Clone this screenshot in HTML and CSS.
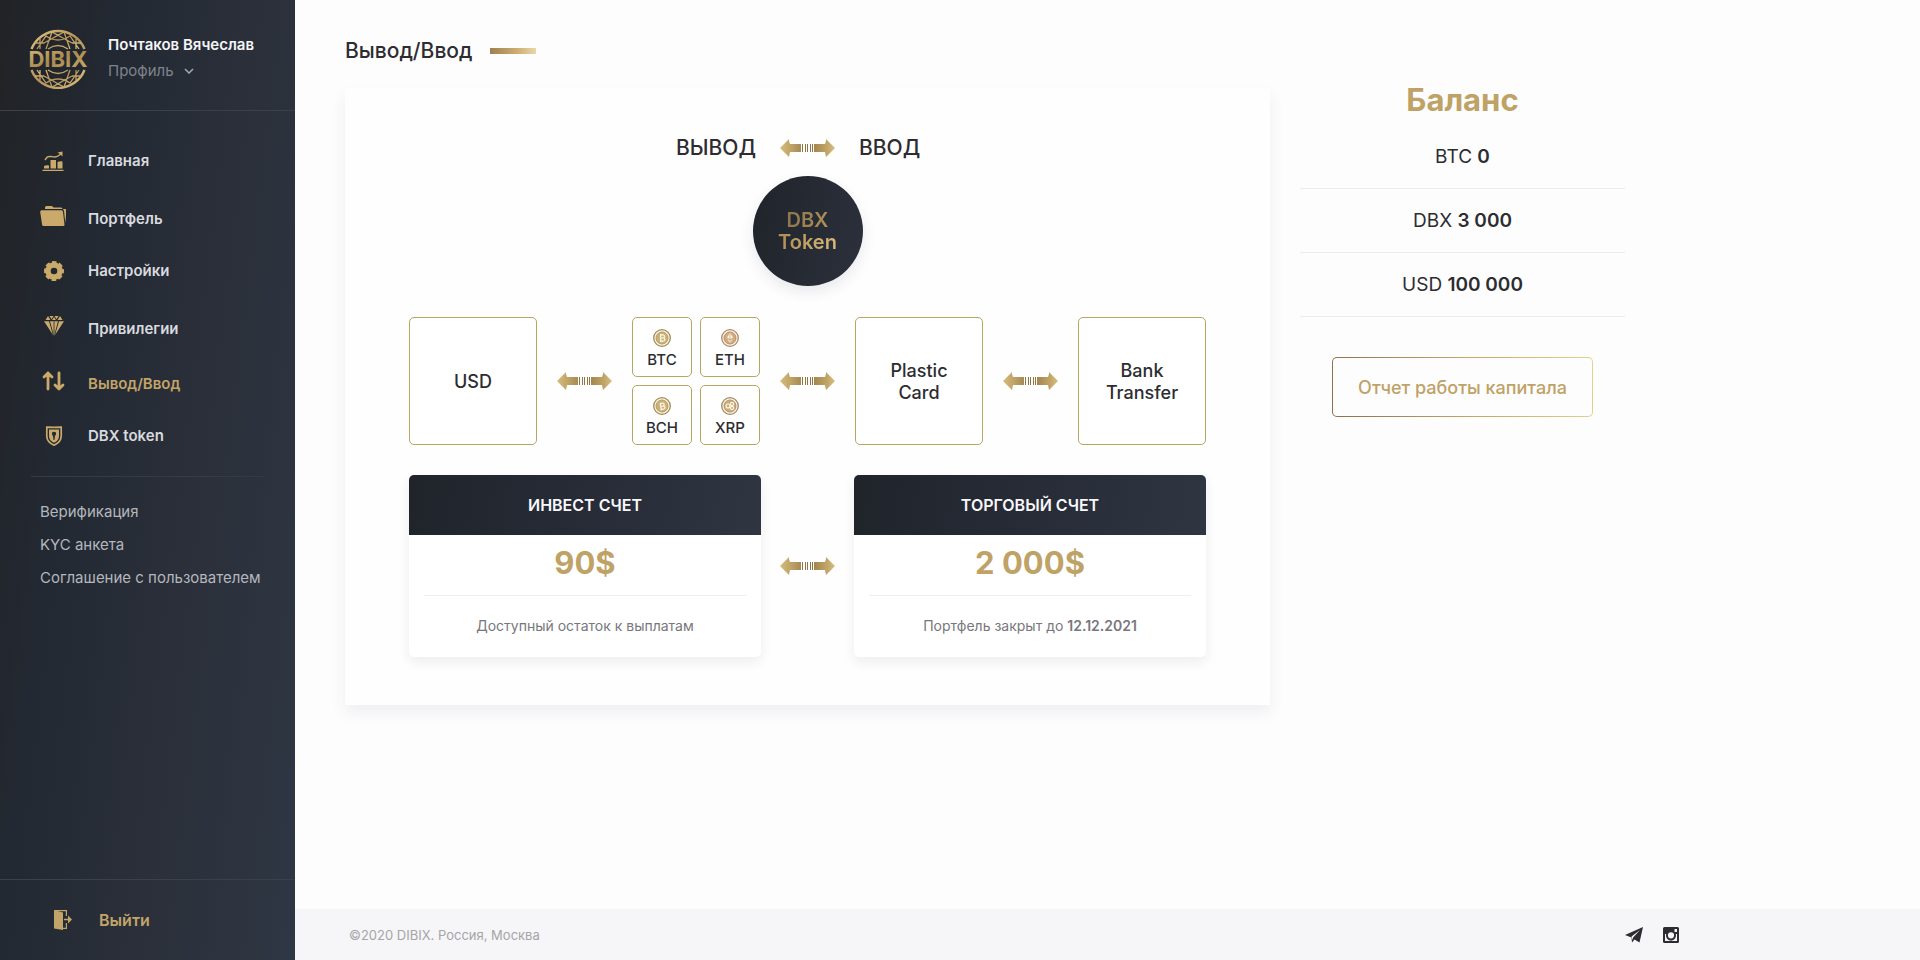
FILE: index.html
```html
<!DOCTYPE html>
<html lang="ru">
<head>
<meta charset="utf-8">
<meta name="viewport" content="width=device-width, initial-scale=1">
<title>DIBIX — Вывод/Ввод</title>
<link rel="stylesheet" href="styles.css">
</head>
<body>
<svg class="sprite" aria-hidden="true">
  <defs>
    <linearGradient id="gold" x1="0" y1="0" x2="1" y2="1">
      <stop offset="0" stop-color="#dcbf7c"/><stop offset="0.5" stop-color="#b3925a"/><stop offset="1" stop-color="#dcc07c"/>
    </linearGradient>
    <linearGradient id="gold-text" x1="0" y1="0" x2="1" y2="1">
      <stop offset="0" stop-color="#d9bb77"/><stop offset="0.5" stop-color="#a98a50"/><stop offset="1" stop-color="#cfae69"/>
    </linearGradient>
    <linearGradient id="head" x1="0" y1="0" x2="1" y2="0">
      <stop offset="0" stop-color="#d6bc7b"/><stop offset="0.5" stop-color="#c0a468"/><stop offset="1" stop-color="#a88a55"/>
    </linearGradient>
    <linearGradient id="tail" x1="0" y1="0" x2="1" y2="0">
      <stop offset="0" stop-color="#a3854f"/><stop offset="0.6" stop-color="#c0a467"/><stop offset="1" stop-color="#d8be7c"/>
    </linearGradient>
  </defs>
  <symbol id="swap" viewBox="0 0 55 20">
    <path fill="url(#head)" d="M0 10 9 1v2l1 3h11v8H10l-1 5Z"/>
    <path fill="url(#tail)" d="M55 10 46 1v2l-1 3H34v8h11l1 5Z"/>
    <path fill="#8f7444" d="M22 6h1v8h-1zM25 6h1v8h-1zM27 6h1v8h-1zM30 6h1v8h-1zM32 6h1v8h-1z"/>
  </symbol>
</svg>

<div class="page">
  <aside class="sidebar">
    <div class="profile">
      <svg class="logo" viewBox="0 0 60 60" role="img" aria-label="DIBIX">
        <g fill="none" stroke="url(#gold)" stroke-width="1.300">
          <path stroke-width="2.400" d="M3.500 20A28.500 28.500 0 0 1 56.500 20M3.500 41A28.500 28.500 0 0 0 56.500 41"/>
          <path d="M7 14h9M53 14h-9M12 10v10M48 10v10M9 20l9-13q12 8 24 0l9 13M18 20 24 3l20 11M42 20 36 3 16 14M20 20q10-7 20 0"/>
          <path d="M7 47h9M53 47h-9M12 51V41M48 51V41M9 41l9 13q12-8 24 0l9-13M18 41l6 17 20-11M42 41l-6 17-20-11M20 41q10 7 20 0"/>
        </g>
        <text class="logo-text" x="30" y="38" text-anchor="middle" fill="url(#gold-text)">DIBIX</text>
      </svg>
      <div class="profile-info">
        <div class="profile-name">Почтаков Вячеслав</div>
        <button class="profile-toggle" type="button">Профиль
          <svg class="chevron" viewBox="0 0 10 6"><path d="m1 1 4 4 4-4" fill="none" stroke="currentColor" stroke-width="1.500"/></svg>
        </button>
      </div>
    </div>

    <nav class="menu">
      <a class="menu-item" href="#">
        <svg class="menu-icon" viewBox="0 0 26 20"><path fill="currentColor" d="M4 17.500V15q2-1 5-.500v3zM10.500 17.500V9h5.500v8.500zM17.500 17.500V11q2.500-1 5-.500v7zM2.500 18.800h21V20h-21z"/><path fill="none" stroke="currentColor" stroke-width="1.500" d="M5 9c2-3 3-4 6-3.500s5 1 7-.500l3-2"/><path fill="currentColor" d="m17.500 1.500 5-1v5l-2-2z"/></svg>
        <span>Главная</span></a>
      <a class="menu-item menu-item--low" href="#">
        <svg class="menu-icon" viewBox="0 0 26 20"><path fill="currentColor" d="M5 3V1.500Q5 0 6.500 0H12l1.500 1.500H21q1.500 0 1.500 1.500z"/><path fill="currentColor" d="M1.500 4.200h20q1.300 0 1.500 1.500l1.500 13q0 1.300-1.300 1.300H3.500q-1.200 0-1.400-1.200L.200 6q0-1.800 1.300-1.800zM23 3h2.300q1.500 0 1.300 1.500L25.300 17 24 5z"/></svg>
        <span>Портфель</span></a>
      <a class="menu-item" href="#">
        <svg class="menu-icon" viewBox="0 0 26 20"><circle cx="14" cy="10" r="6" fill="none" stroke="currentColor" stroke-width="5.400"/><circle cx="14" cy="10" r="8.600" fill="none" stroke="currentColor" stroke-width="2.800" stroke-dasharray="4.400 2.354" stroke-dashoffset="2.200"/></svg>
        <span>Настройки</span></a>
      <a class="menu-item menu-item--low" href="#">
        <svg class="menu-icon" viewBox="0 0 26 20"><path fill="currentColor" d="M8 0 10.500 4H5.500zM9.500 0h4L11.500 3.300zM14.500 0h4L16.500 3.300zM20 0l2.500 4h-5zM14 1l2 3h-4zM4 5.200h5L13 19zM10 5.200h8L14 20zM19 5.200h5L15 19z"/><path stroke="#252c36" stroke-width=".8" d="M14 5.300V18"/></svg>
        <span>Привилегии</span></a>
      <a class="menu-item menu-item--low menu-item--active" href="#" aria-current="page">
        <svg class="menu-icon" viewBox="0 0 26 20"><path fill="none" stroke="currentColor" stroke-width="2.800" stroke-linecap="round" stroke-linejoin="round" d="M8 18V2M4 6l4-4 4 4M19 2v16M15 14l4 4 4-4"/></svg>
        <span>Вывод/Ввод</span></a>
      <a class="menu-item" href="#">
        <svg class="menu-icon" viewBox="0 0 26 20"><path fill="none" stroke="currentColor" stroke-width="1.700" d="M6.800 1.200Q14 1.500 21.200 1.200V10q0 6-7.200 9.200Q6.800 16 6.800 10z"/><path fill="currentColor" d="M9 3.500h10V10q0 4.500-5 6.700Q9 14.500 9 10z"/><path fill="#252c36" d="M12 6.500q2-1.500 4 0v2L15 10l-.5 4h-1L13 10l-1-1.500z"/></svg>
        <span>DBX token</span></a>
    </nav>

    <nav class="links">
      <a href="#">Верификация</a>
      <a href="#">KYC анкета</a>
      <a href="#">Соглашение с пользователем</a>
    </nav>

    <div class="exit">
      <a class="exit-link" href="#">
        <svg class="exit-icon" viewBox="0 0 18 20"><path fill="currentColor" d="M0 0l9 2.500V20L0 18.500z"/><path fill="none" stroke="currentColor" stroke-width="1.200" d="M0 .6h12.400V6M12.400 13v5.400H9"/><path fill="currentColor" d="M10 8.800h4V5.500l4 4-4 4v-3.200h-4z"/></svg>
        <span>Выйти</span></a>
    </div>
  </aside>

  <div class="main">
    <main class="content">
      <h1 class="title">Вывод/Ввод</h1>
      <div class="columns">
        <section class="card">
          <div class="direction">
            <span class="direction-from">ВЫВОД</span>
            <svg class="swap"><use href="#swap"/></svg>
            <span>ВВОД</span>
          </div>
          <button class="token" type="button"><span>DBX<br>Token</span></button>

          <div class="methods">
            <button class="method" type="button">USD</button>
            <svg class="swap"><use href="#swap"/></svg>
            <div class="coins">
              <button class="coin" type="button"><svg class="coin-icon" viewBox="0 0 18 18"><circle cx="9" cy="9" r="8.300" fill="#fbf4e2" stroke="#a38a55" stroke-width="1.300"/><circle cx="9" cy="9" r="6" fill="#c9b27b" stroke="#b99b5f"/><path fill="none" stroke="#fffbe9" stroke-width="1.200" d="M7 6h3q1.500 0 1.500 1.500T10 9H7.500H10q2 0 2 1.500T10 12H7M7.700 5v8M9.300 5v1M9.300 12v1"/></svg>BTC</button>
              <button class="coin" type="button"><svg class="coin-icon" viewBox="0 0 18 18"><circle cx="9" cy="9" r="8.300" fill="#fdf3ea" stroke="#ae8a66" stroke-width="1.300"/><circle cx="9" cy="9" r="6" fill="#cfae85" stroke="#b98f66"/><path fill="#fff4df" d="m9 4 3 4.500-3 1.800-3-1.800zM6.300 10 9 11.500l2.700-1.500L9 14z"/><path stroke="#b98f66" stroke-width=".6" d="M9 5v8"/></svg>ETH</button>
              <button class="coin" type="button"><svg class="coin-icon" viewBox="0 0 18 18"><circle cx="9" cy="9" r="8.300" fill="#fbf4e2" stroke="#a38a55" stroke-width="1.300"/><circle cx="9" cy="9" r="6" fill="#c9b27b" stroke="#b99b5f"/><path fill="none" stroke="#fffbe9" stroke-width="1.200" d="m6.500 7 3-1q1.500 0 1.700 1.300T10 9l-2.500.500L10 9q2 0 2 1.300T10.500 12l-3 .800M7.300 6l1 7"/></svg>BCH</button>
              <button class="coin" type="button"><svg class="coin-icon" viewBox="0 0 18 18"><circle cx="9" cy="9" r="8.300" fill="#fdf3ea" stroke="#a38a60" stroke-width="1.300"/><circle cx="9" cy="9" r="6" fill="#c9ae80" stroke="#b39460"/><g fill="none" stroke="#fff8e6" stroke-width="1.100"><circle cx="7" cy="9" r="2"/><circle cx="11" cy="7" r="1.600"/><circle cx="11" cy="11" r="1.600"/></g></svg>XRP</button>
            </div>
            <svg class="swap"><use href="#swap"/></svg>
            <button class="method" type="button">Plastic<br>Card</button>
            <svg class="swap"><use href="#swap"/></svg>
            <button class="method" type="button">Bank<br>Transfer</button>
          </div>

          <div class="accounts">
            <article class="account">
              <h2 class="account-title">ИНВЕСТ СЧЕТ</h2>
              <div class="account-sum">90$</div>
              <p class="account-note">Доступный остаток к выплатам</p>
            </article>
            <svg class="swap"><use href="#swap"/></svg>
            <article class="account">
              <h2 class="account-title">ТОРГОВЫЙ СЧЕТ</h2>
              <div class="account-sum">2 000$</div>
              <p class="account-note">Портфель закрыт до <b>12.12.2021</b></p>
            </article>
          </div>
        </section>

        <section class="balance">
          <h2 class="balance-title">Баланс</h2>
          <ul class="balance-list">
            <li>BTC <b>0</b></li>
            <li>DBX <b>3 000</b></li>
            <li>USD <b>100 000</b></li>
          </ul>
          <button class="report" type="button">Отчет работы капитала</button>
        </section>
      </div>
    </main>

    <footer class="footer">
      <div class="footer-inner">
        <span>©2020 DIBIX. Россия, Москва</span>
        <div class="social">
          <a href="#" aria-label="Telegram"><svg viewBox="0 0 18 16"><path fill="currentColor" d="M18 0 14.500 15.500 9.500 12.500 7 15.500 6.500 10.500 0 8zM15 3 6.500 9.500l.8 3.500.8-2.500z"/></svg></a>
          <a href="#" aria-label="Instagram"><svg viewBox="0 0 16 16"><path fill="currentColor" fill-rule="evenodd" d="M1.500 0h13Q16 0 16 1.500v13q0 1.500-1.500 1.500h-13Q0 16 0 14.500v-13Q0 0 1.500 0zM11.500 2v3H14V2zM2 7v7h12V7h-1.300a5 5 0 1 1-9.400 0z"/><circle cx="8" cy="8.300" r="3.900" fill="#f6f5f7" stroke="currentColor" stroke-width="1.600"/></svg></a>
        </div>
      </div>
    </footer>
  </div>
</div>
</body>
</html>
```
FILE: styles.css
```css
* { box-sizing: border-box; }

body {
  margin: 0;
  font-family: Inter, "Open Sans", sans-serif;
  font-size: 15px;
  color: #2d2d31;
  background: #fdfdfe;
}

button {
  font: inherit;
  color: inherit;
  cursor: pointer;
}

a { color: inherit; text-decoration: none; }
h1, h2, p, ul { margin: 0; padding: 0; }
svg { display: block; flex: none; }

.sprite { position: absolute; width: 0; height: 0; }

.page { display: flex; min-height: 100vh; }

/* Sidebar */
.sidebar {
  display: flex;
  flex-direction: column;
  flex: none;
  width: 295px;
  color: #d8dadf;
  background: linear-gradient(97deg, #212326, #232933 30%, #2b303a 65%, #2e3744);
}

.profile {
  display: flex;
  align-items: center;
  gap: 20px;
  height: 111px;
  padding: 8px 0 0 28px;
  border-bottom: 1px solid #3c4149;
}

.logo { width: 60px; height: 60px; }
.logo-text { font-size: 22px; font-weight: 700; }

.profile-info { display: grid; gap: 8px; padding-bottom: 2px; }
.profile-name { font-size: 15px; line-height: 18px; font-weight: 600; color: #f4f5f8; }
.profile-toggle {
  display: flex;
  align-items: center;
  gap: 10px;
  padding: 0;
  border: 0;
  background: none;
  line-height: 18px;
  color: #7f838b;
}
.chevron { width: 10px; height: 6px; color: #a6a9b0; }

.menu {
  display: grid;
  gap: 35px;
  margin: 0 31px;
  padding: 40px 0 30px 9px;
  border-bottom: 1px solid #363b43;
}
.menu-item {
  display: flex;
  align-items: center;
  gap: 22px;
  height: 20px;
  line-height: 14px;
  font-weight: 600;
}
.menu-item--low { align-items: flex-end; }
.menu-item--active { color: #c3a469; }
.menu-icon { width: 26px; height: 20px; color: #c9aa6b; }

.links {
  display: grid;
  gap: 15px;
  padding: 26px 0 30px 40px;
  line-height: 18px;
  color: #b4b7bd;
}

.exit {
  display: flex;
  align-items: center;
  height: 81px;
  margin-top: auto;
  padding-left: 54px;
  border-top: 1px solid #3c4149;
}
.exit-link {
  display: flex;
  align-items: center;
  gap: 27px;
  font-size: 16px;
  font-weight: 600;
  color: #c3a469;
}
.exit-icon { width: 18px; height: 20px; }

/* Content */
.main { display: flex; flex-direction: column; flex: 1; min-width: 0; }

.content {
  flex: 1;
  max-width: 1380px;
  padding: 39px 50px 40px;
}

.title {
  display: flex;
  align-items: center;
  gap: 17px;
  font-size: 21px;
  line-height: 24px;
  font-weight: 500;
}
.title::after {
  content: "";
  width: 46px;
  height: 6px;
  background: linear-gradient(90deg, #9f8050, #cfae73 60%, #ead7aa);
}

.columns {
  display: grid;
  grid-template-columns: 925fr 325fr;
  gap: 30px;
  margin-top: 25px;
}

.card {
  display: flex;
  flex-direction: column;
  padding: 48px 64px;
  background: #fefefe;
  box-shadow: 0 8px 14px rgba(50, 40, 60, 0.07);
}

.swap { width: 55px; height: 20px; }

.direction {
  display: grid;
  grid-template-columns: 1fr auto 1fr;
  align-items: center;
  gap: 24px;
  font-size: 21px;
  line-height: 24px;
  font-weight: 500;
}
.direction-from { text-align: right; }

.token {
  align-self: center;
  width: 110px;
  height: 110px;
  margin-top: 16px;
  padding: 0;
  border: 0;
  border-radius: 50%;
  font-size: 20px;
  line-height: 22px;
  font-weight: 600;
  background: linear-gradient(100deg, #20242a, #2b303c);
  box-shadow: 0 6px 14px rgba(40, 50, 90, 0.1);
}
.token span {
  color: transparent;
  background: linear-gradient(100deg, #8c744b, #b3945a 50%, #d9ba76);
  background-clip: text;
}

.methods {
  display: flex;
  justify-content: space-between;
  align-items: center;
  margin-top: 31px;
}
.method {
  width: 128px;
  height: 128px;
  padding: 2px 0 0;
  border: 1px solid #b7a663;
  border-radius: 5px;
  background: #fff;
  font-size: 18px;
  line-height: 22px;
  font-weight: 500;
}
.coins {
  display: grid;
  grid-template-columns: 60px 60px;
  gap: 8px;
}
.coin {
  display: flex;
  flex-direction: column;
  align-items: center;
  gap: 4px;
  height: 60px;
  padding: 11px 0 0;
  border: 1px solid #b7a663;
  border-radius: 5px;
  background: #fff;
  font-size: 15px;
  line-height: 18px;
  font-weight: 500;
}
.coin-icon { width: 18px; height: 18px; }

.accounts {
  display: grid;
  grid-template-columns: 1fr auto 1fr;
  align-items: center;
  gap: 19px;
  margin-top: 30px;
}
.account {
  border-radius: 5px;
  overflow: hidden;
  text-align: center;
  background: #fff;
  box-shadow: 0 5px 12px rgba(50, 40, 60, 0.08);
}
.account-title {
  font-size: 16px;
  line-height: 60px;
  font-weight: 600;
  color: #f8f8fb;
  background: linear-gradient(100deg, #20242a, #252a35 40%, #2f3541);
}
.account-sum {
  margin: 0 15px;
  padding: 10px 0 14px;
  border-bottom: 1px solid #eeedf0;
  font-size: 31px;
  line-height: 36px;
  font-weight: 700;
  color: #bfa266;
}
.account-note {
  padding: 21px 0 22px;
  font-size: 14px;
  line-height: 18px;
  color: #77777c;
}
.account-note b { font-weight: 600; }

.balance { text-align: center; }
.balance-title {
  font-size: 31px;
  line-height: 24px;
  font-weight: 700;
  color: #bfa266;
}
.balance-list { list-style: none; padding-top: 13px; }
.balance-list li {
  padding: 20px 0;
  border-bottom: 1px solid #ecebef;
  font-size: 19px;
  line-height: 23px;
}
.balance-list b { font-weight: 600; }

.report {
  height: 60px;
  margin-top: 40px;
  padding: 0 25px;
  border: 1px solid transparent;
  border-radius: 5px;
  font-size: 18px;
  font-weight: 500;
  color: #bfa266;
  background:
    linear-gradient(#fdfdfe, #fdfdfe) padding-box,
    linear-gradient(80deg, #8a6f4c, #c0a468 50%, #e0d48f) border-box;
}

/* Footer */
.footer { background: #f6f5f7; }
.footer-inner {
  display: flex;
  justify-content: space-between;
  align-items: center;
  max-width: 1390px;
  height: 51px;
  padding: 0 6px 0 54px;
  font-size: 13px;
  color: #a5a5a8;
}
.social { display: flex; gap: 20px; color: #2d2d31; }
.social svg { height: 16px; }
```
